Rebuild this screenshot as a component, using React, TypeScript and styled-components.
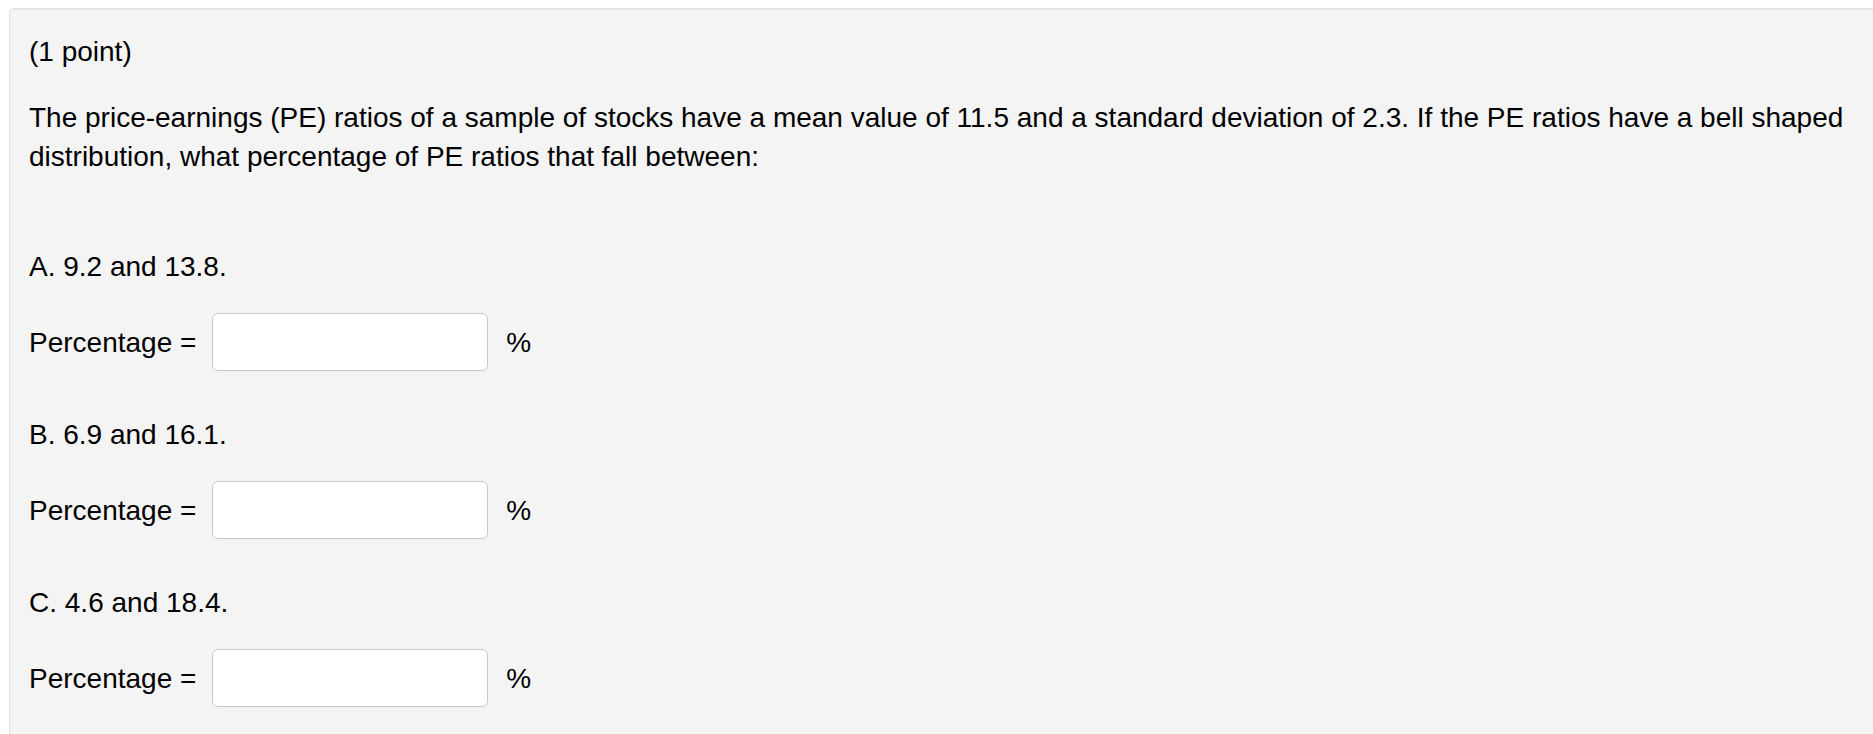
import styled, { createGlobalStyle } from 'styled-components';

const GlobalStyle = createGlobalStyle`
  html, body {
    margin: 0;
    padding: 0;
    background: #ffffff;
    overflow: hidden;
  }

  body {
    font-family: "Liberation Sans", Arial, Helvetica, sans-serif;
    color: #000;
  }
`;

const Well = styled.div`
  margin: 8px -24px 0 9px;
  padding: 23px 19px 40px;
  background-color: #f4f4f4;
  border: 1px solid #e2e2e2;
  border-radius: 5px;
  box-shadow: inset 0 1px 2px rgba(0, 0, 0, 0.06);
  font-size: 28px;
  line-height: 39px;
`;

const Points = styled.div`
  margin-bottom: 27px;
`;

const Statement = styled.p`
  margin: 0 0 71px;
`;

const Part = styled.div`
  margin-bottom: 44px;
`;

const PartLabel = styled.div`
  margin-bottom: 27px;
`;

const AnswerRow = styled.div`
  display: flex;
  align-items: center;
`;

const AnswerLabel = styled.label`
  margin-right: 16px;
`;

const AnswerInput = styled.input`
  box-sizing: border-box;
  width: 276px;
  height: 58px;
  padding: 6px 12px;
  background: #fff;
  border: 1.5px solid #c8c8c8;
  border-radius: 6px;
  font: inherit;
  outline: none;
`;

const Unit = styled.span`
  margin-left: 18px;
`;

const parts = [
  { letter: 'A', range: '9.2 and 13.8.' },
  { letter: 'B', range: '6.9 and 16.1.' },
  { letter: 'C', range: '4.6 and 18.4.' },
];

export default function App() {
  return (
    <>
      <GlobalStyle />
      <Well>
        <Points>(1 point)</Points>
        <Statement>
          The price-earnings (PE) ratios of a sample of stocks have a mean value of 11.5 and a standard
          deviation of 2.3. If the PE ratios have a bell shaped distribution, what percentage of PE ratios
          that fall between:
        </Statement>
        {parts.map((part) => (
          <Part key={part.letter}>
            <PartLabel>
              {part.letter}. {part.range}
            </PartLabel>
            <AnswerRow>
              <AnswerLabel htmlFor={`answer-${part.letter}`}>Percentage =</AnswerLabel>
              <AnswerInput id={`answer-${part.letter}`} type="text" />
              <Unit>%</Unit>
            </AnswerRow>
          </Part>
        ))}
      </Well>
    </>
  );
}
